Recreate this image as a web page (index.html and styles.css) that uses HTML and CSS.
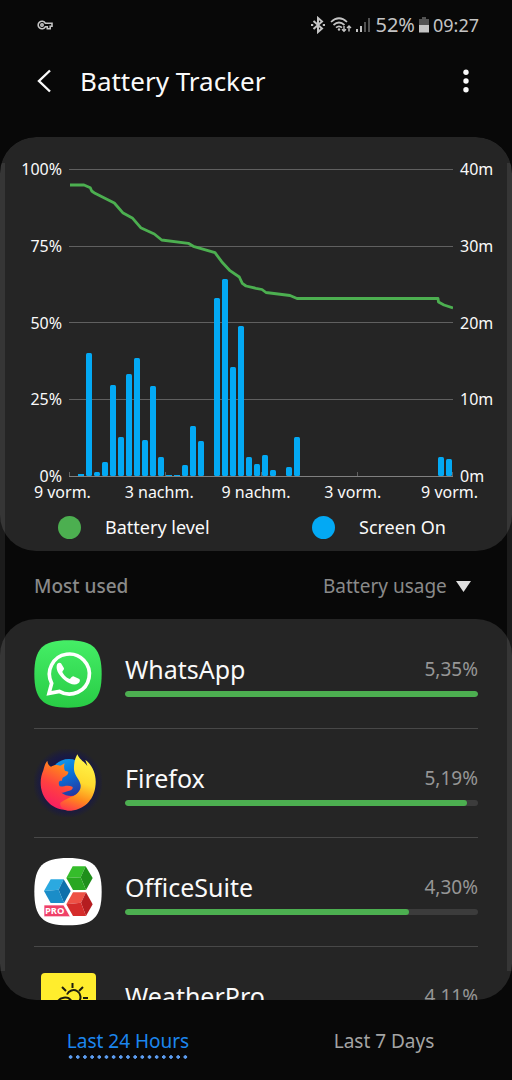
FILE: index.html
```html
<!DOCTYPE html>
<html lang="en">
<head>
<meta charset="utf-8">
<meta name="viewport" content="width=device-width, initial-scale=1">
<title>Battery Tracker</title>
<link rel="stylesheet" href="styles.css">
</head>
<body>
<div class="status">
  <svg class="status-key" width="16" height="10" viewBox="0 0 16 10" fill="none" stroke="currentColor" stroke-width="1.6"><path d="M8.3 3.2A3.8 3.8 0 1 0 8.3 6.8H10.3V8.8H13.2V6.3H15V3.2Z"/><circle cx="5" cy="5" r="1.2"/></svg>
  <div class="status-right">
    <svg width="16" height="18" viewBox="0 0 16 18" fill="none" stroke="currentColor" stroke-width="2"><path d="M3.5 5 12 12.500 8 16V2L12 5.500 3.500 13"/><path d="M1 9h2.200M12.800 9H15"/></svg>
    <svg width="22" height="18" viewBox="0 0 22 18" fill="none" stroke="currentColor" stroke-width="1.7"><path d="M1 6Q9-1.500 17 6M3.500 9Q9 4 14.500 9M6 11.600Q9 9 12 11.600"/><circle cx="9" cy="13.500" r="1.200" fill="currentColor" stroke="none"/><path stroke-width="1.400" d="M14 10v5M12 13.200l2 2 2-2M19 15.500v-5M17 12l2-2 2 2"/></svg>
    <svg width="15" height="18" viewBox="0 0 15 18" fill="currentColor"><path d="M0 13h2v3H0zM4 10h2v6H4z"/><path opacity=".4" d="M8 6h2v10H8zM12 2h2v14h-2z"/></svg>
    <span class="status-text status-percent">52%</span>
    <svg width="10" height="16" viewBox="0 0 10 16" fill="currentColor"><path opacity=".4" d="M3 0h4v2h3v6H0V2h3z"/><path d="M0 8h10v7.500H0z"/></svg>
    <span class="status-text">09:27</span>
  </div>
</div>

<header class="appbar">
  <button class="icon-btn" type="button" aria-label="Back"><svg width="16" height="24" viewBox="0 0 16 24" fill="none" stroke="currentColor" stroke-width="2.400"><path d="M14 1.500 3 12l11 10.500"/></svg></button>
  <h1 class="title">Battery Tracker</h1>
  <button class="icon-btn" type="button" aria-label="More options"><svg width="6" height="24" viewBox="0 0 6 24" fill="currentColor"><circle cx="3" cy="3.200" r="2.700"/><circle cx="3" cy="12" r="2.700"/><circle cx="3" cy="20.800" r="2.700"/></svg></button>
</header>

<div class="viewport">
<main class="content">
  <section class="card chart-card" aria-label="Battery chart">
    <div class="chart">
      <div class="axis axis-left"><span>100%</span><span>75%</span><span>50%</span><span>25%</span><span>0%</span></div>
      <svg class="plot" viewBox="0 0 384 309" preserveAspectRatio="none">
        <g fill="#606060"><path d="M0 1h384v1H0zM0 78h384v1H0zM0 154h384v1H0zM0 231h384v1H0z"/></g>
        <g fill="#03a9f4" class="bars">
          <rect x="9" y="306" width="6" height="2"/><rect x="17" y="185" width="6" height="123" rx="1.500"/><rect x="25" y="304" width="6" height="4" rx="1.500"/><rect x="33" y="294" width="6" height="14" rx="1.500"/><rect x="41" y="217" width="6" height="91" rx="1.500"/><rect x="49" y="269" width="6" height="39" rx="1.500"/><rect x="57" y="206" width="6" height="102" rx="1.500"/><rect x="65" y="190" width="6" height="118" rx="1.500"/><rect x="73" y="272" width="6" height="36" rx="1.500"/><rect x="81" y="218" width="6" height="90" rx="1.500"/><rect x="89" y="289" width="6" height="19" rx="1.500"/><rect x="97" y="307" width="6" height="1"/><rect x="105" y="307" width="6" height="1"/><rect x="113" y="297" width="6" height="11" rx="1.500"/><rect x="121" y="258" width="6" height="50" rx="1.500"/><rect x="129" y="273" width="6" height="35" rx="1.500"/><rect x="145" y="130" width="6" height="178" rx="1.500"/><rect x="153" y="111" width="6" height="197" rx="1.500"/><rect x="161" y="199" width="6" height="109" rx="1.500"/><rect x="169" y="158" width="6" height="150" rx="1.500"/><rect x="177" y="289" width="6" height="19" rx="1.500"/><rect x="185" y="296" width="6" height="12" rx="1.500"/><rect x="193" y="287" width="6" height="21" rx="1.500"/><rect x="201" y="302" width="6" height="6" rx="1.500"/><rect x="217" y="299" width="6" height="9" rx="1.500"/><rect x="225" y="269" width="6" height="39" rx="1.500"/><rect x="369" y="289" width="6" height="19" rx="1.500"/><rect x="377" y="291" width="6" height="17" rx="1.500"/>
        </g>
        <path fill="#808080" d="M0 308h384v1H0z"/>
        <path fill="#606060" d="M0 304h1v4H0zM96 304h1v4h-1zM192 304h1v4h-1zM288 304h1v4h-1zM383 304h1v4h-1z"/>
        <polyline fill="none" stroke="#4caf50" stroke-width="2.800" stroke-linejoin="round" vector-effect="non-scaling-stroke" points="1,17 15,17 21.300,19.700 22.700,23 26,25.300 45.300,35 53.700,44.700 63.700,50.300 71.700,59.700 85.300,66 92.700,72 119.300,75.300 124.300,78.300 146,84.700 152.700,93.700 161,102.700 170.300,109 173.300,115.300 177,118 187,120.300 193,121.500 197,124.500 221,127.500 228,130.500 369,130.500 369.500,134 375,137 384,140"/>
      </svg>
      <div class="axis axis-right"><span>40m</span><span>30m</span><span>20m</span><span>10m</span><span>0m</span></div>
    </div>
    <div class="times"><span>9 vorm.</span><span>3 nachm.</span><span>9 nachm.</span><span>3 vorm.</span><span>9 vorm.</span></div>
    <div class="legend">
      <div class="legend-item"><i class="dot dot-level"></i>Battery level</div>
      <div class="legend-item"><i class="dot dot-screen"></i>Screen On</div>
    </div>
  </section>

  <div class="section-head">
    <h2 class="section-title"><label for="sort">Most used</label></h2>
    <div class="sort">
      <select class="sort-select" id="sort"><option>Battery usage</option></select>
      <svg class="sort-arrow" width="15" height="11" viewBox="0 0 15 11" fill="#e0e0e0"><path d="M0 0h15L7.500 11z"/></svg>
    </div>
  </div>

  <ul class="card apps">
    <li class="app">
      <svg class="app-icon" viewBox="27 28 204 204">
        <defs><linearGradient id="wa" x1="0" y1="0" x2="0" y2="1"><stop offset="0" stop-color="#45ee66"/><stop offset="1" stop-color="#28cc45"/></linearGradient></defs>
        <path fill="url(#wa)" d="M129 29C205 29 230 54 230 130S205 231 129 231 28 206 28 130 53 29 129 29Z"/>
        <path fill="none" stroke="#fff" stroke-width="11" d="M72 188 80 158A60 60 0 1 1 103 182Z"/>
        <path fill="#fff" d="M108 98c-5-4-12 0-13 8-2 15 10 31 24 43 14 11 30 17 41 9 5-4 6-10 3-13l-18-8c-5-1-8 8-11 8-8-2-19-13-22-21 0-3 6-7 5-11Z"/>
      </svg>
      <div class="app-body"><div class="app-row"><span class="app-name">WhatsApp</span><span class="app-value">5,35%</span></div><div class="meter"><div class="meter-fill" style="width:100%"></div></div></div>
    </li>
    <li class="app">
      <svg class="app-icon" viewBox="27 27 204 204">
        <defs>
          <radialGradient id="navy"><stop offset=".65" stop-color="#16164a"/><stop offset=".82" stop-color="#1c1c3c"/><stop offset="1" stop-color="#252525"/></radialGradient>
          <linearGradient id="fox" gradientUnits="userSpaceOnUse" x1="150" y1="60" x2="80" y2="200"><stop offset="0" stop-color="#ffa41c"/><stop offset=".3" stop-color="#ff7a22"/><stop offset=".62" stop-color="#ff4040"/><stop offset="1" stop-color="#f81e62"/></linearGradient>
          <linearGradient id="tail" gradientUnits="userSpaceOnUse" x1="175" y1="50" x2="120" y2="208"><stop offset="0" stop-color="#fff64a"/><stop offset=".45" stop-color="#ffda2e"/><stop offset=".75" stop-color="#ff8a1c"/><stop offset="1" stop-color="#ff3a4a"/></linearGradient>
          <linearGradient id="globe" x1="0" y1="0" x2=".4" y2="1"><stop offset="0" stop-color="#12a4f0"/><stop offset=".5" stop-color="#0872d8"/><stop offset="1" stop-color="#243aa4"/></linearGradient>
        </defs>
        <circle cx="129" cy="129" r="106" fill="url(#navy)"/>
        <circle cx="132" cy="115" r="58" fill="url(#globe)"/>
        <path fill="url(#fox)" d="M67 62C68 72 72 77 78 80C87 74 97 74 106 77L119 70C116 78 117 86 120 92L130 95C130 104 123 107 113 113L110 123C103 119 98 128 104 139C114 141 127 133 142 140C146 145 140 151 130 153C121 155 116 160 109 158C125 170 152 174 164 154L190 180C160 216 104 220 72 189C43 160 42 121 55 91C58 79 61 69 67 62Z"/>
        <path fill="url(#tail)" d="M157 43C165 61 178 65 187 78L181 59C205 78 216 108 211 140C206 180 176 213 128 212C112 210 104 200 106 188C118 180 132 173 146 168C160 160 168 149 167 136C165 118 149 108 147 89C146 70 150 55 157 43Z"/>
      </svg>
      <div class="app-body"><div class="app-row"><span class="app-name">Firefox</span><span class="app-value">5,19%</span></div><div class="meter"><div class="meter-fill" style="width:97%"></div></div></div>
    </li>
    <li class="app">
      <svg class="app-icon" viewBox="27 24 204 204">
        <path fill="#fff" d="M129 24C205 24 230 49 230 125S205 226 129 226 28 201 28 125 53 24 129 24Z"/>
        <path fill="#35bd2b" d="M143 49h39l-15 33-43 2z"/><path fill="#1f8f1b" d="m182 49 21 35-20 36-16-38z"/><path fill="#29a721" d="m124 84 43-2 16 38h-39z"/>
        <path fill="#2ba9e0" d="M77 88h39l-15 31-44 4z"/><path fill="#0f70ab" d="m116 88 21 35-20 36-16-40z"/><path fill="#1a8dc8" d="m57 123 44-4 16 40H77z"/>
        <path fill="#ee5146" d="M144 127h39l-15 31-44 5z"/><path fill="#b51d20" d="m183 127 20 36-20 35-15-40z"/><path fill="#d52c2b" d="m124 163 44-5 15 40h-39z"/>
        <path fill="#ef4068" stroke="#fff" stroke-width="2" d="M57 165h59l20 35H57z"/>
        <text class="pro" x="60" y="192">PRO</text>
      </svg>
      <div class="app-body"><div class="app-row"><span class="app-name">OfficeSuite</span><span class="app-value">4,30%</span></div><div class="meter"><div class="meter-fill" style="width:80.400%"></div></div></div>
    </li>
    <li class="app">
      <svg class="app-icon" viewBox="0 0 68 68">
        <rect x="7" y="6" width="55" height="55" rx="4" fill="#ffed2d"/>
        <g fill="none" stroke="#1c1c10" stroke-width="2"><path d="M38.500 16v5M28 20l4 4M49 20l-4 4M49 31h5M33 27.500A7 7 0 1 1 44.500 35"/><path d="M24 50a7 7 0 0 1-1-13A8 8 0 0 1 38 35a7 7 0 0 1 4 15z"/></g>
      </svg>
      <div class="app-body"><div class="app-row"><span class="app-name">WeatherPro</span><span class="app-value">4,11%</span></div><div class="meter"><div class="meter-fill" style="width:77%"></div></div></div>
    </li>
  </ul>
</main>
</div>

<nav class="tabs">
  <button class="tab" type="button" aria-pressed="true"><span class="tab-label tab-label-active">Last 24 Hours</span></button>
  <button class="tab" type="button" aria-pressed="false"><span class="tab-label">Last 7 Days</span></button>
</nav>
</body>
</html>
```

FILE: styles.css
```css
* { box-sizing: border-box; }

body {
  margin: 0;
  height: 100vh;
  display: flex;
  flex-direction: column;
  background: #080808;
  color: #fafafa;
  font-family: "Noto Sans", "Open Sans", sans-serif;
  font-size: 19px;
  line-height: 24px;
}

button, select { font: inherit; color: inherit; background: none; border: 0; padding: 0; }
h1, h2, ul { margin: 0; padding: 0; font-weight: 400; }
svg { display: block; }

.status {
  display: flex;
  align-items: center;
  justify-content: space-between;
  height: 50px;
  padding: 0 33px 0 37px;
  color: #c4c4c4;
}
.status-right { display: flex; align-items: center; gap: 4px; }
.status-text { font-size: 18px; }
.status-percent { font-size: 20px; }

.appbar {
  display: flex;
  align-items: center;
  height: 62px;
  margin-bottom: 25px;
  padding: 0 32px 0 24px;
}
.icon-btn {
  display: flex;
  align-items: center;
  justify-content: center;
  width: 40px;
  height: 48px;
}
.icon-btn:last-child { width: 28px; }
.title { flex: 1; padding-left: 16px; font-size: 26px; line-height: 32px; }

.viewport {
  position: relative;
  flex: 1;
  min-height: 0;
  border-radius: 36px;
  overflow: hidden;
}
.viewport::before,
.viewport::after {
  content: "";
  position: absolute;
  z-index: 1;
  top: 26px;
  bottom: 29px;
  width: 5px;
  background: rgba(255, 255, 255, 0.08);
  pointer-events: none;
}
.viewport::before { left: 0; }
.viewport::after { right: 0; }
.content { height: 100%; overflow-y: auto; scrollbar-width: none; }

.card { background: #252525; border-radius: 36px; }

.chart-card { padding: 24px 0 12px; }
.chart {
  display: grid;
  grid-template-columns: 62px 1fr 52px;
  column-gap: 7px;
  font-size: 16px;
  line-height: 16px;
}
.axis { display: flex; flex-direction: column; justify-content: space-between; }
.axis-left { text-align: right; }
.plot { width: 100%; height: 309px; margin: 7px 0; }
.times {
  display: grid;
  grid-template-columns: repeat(5, 1fr);
  padding: 0 14px;
  font-size: 16px;
  line-height: 16px;
  text-align: center;
}
.legend { display: grid; grid-template-columns: 1fr 1fr; padding: 0 2px; margin-top: 15px; font-size: 18px; }
.legend-item { display: flex; align-items: center; gap: 24px; padding-left: 56px; }
.dot { width: 23px; height: 23px; border-radius: 50%; }
.dot-level { background: #4caf50; }
.dot-screen { background: #03a9f4; }

.section-head {
  display: flex;
  align-items: center;
  justify-content: space-between;
  height: 68px;
  padding: 2px 41px 0 34px;
  color: #8a8a8a;
}
.section-title { font-size: 19px; font-weight: 500; }
.sort { position: relative; display: flex; align-items: center; }
.sort-select { appearance: none; padding-right: 24px; cursor: pointer; }
.sort-arrow { position: absolute; right: 0; pointer-events: none; }

.apps { list-style: none; padding: 1px 34px 0; }
.app {
  display: flex;
  align-items: center;
  gap: 23px;
  height: 109px;
  border-bottom: 1px solid #484848;
}
.app-icon { flex: none; width: 68px; height: 68px; }
.app-body { flex: 1; }
.app-row { display: flex; align-items: center; justify-content: space-between; }
.app-name { font-size: 25px; line-height: 36px; }
.app-value { color: #969696; }
.meter { height: 6px; margin-top: 4px; border-radius: 3px; background: #3c3c3c; overflow: hidden; }
.meter-fill { height: 100%; border-radius: 3px; background: #4caf50; }
.pro { fill: #fff; font-family: "Open Sans", "Noto Sans", sans-serif; font-size: 28px; font-weight: 700; }

.tabs { display: grid; grid-template-columns: 1fr 1fr; height: 80px; }
.tab { display: flex; justify-content: center; align-items: flex-start; padding-top: 29px; color: #a4a4a4; }
.tab-label { padding-bottom: 6px; }
.tab-label-active {
  color: #1c86ee;
  background-image: radial-gradient(circle, #5b9cf0 40%, transparent 60%);
  background-image: radial-gradient(circle 2px, #5b9cf0 75%, transparent 100%);
  background-position: left bottom;
  background-size: 7px 4px;
  background-repeat: round no-repeat;
}
```
